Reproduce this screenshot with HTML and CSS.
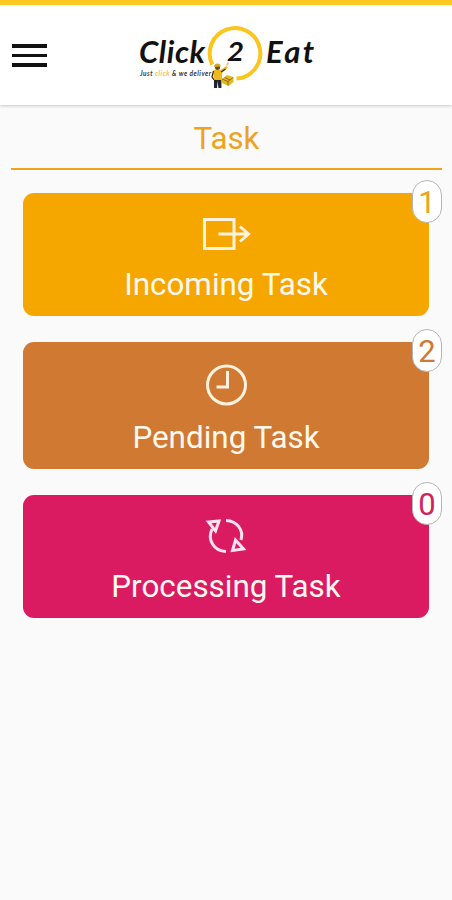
FILE: index.html
```
<!DOCTYPE html>
<html lang="en">
<head>
<meta charset="utf-8">
<title>Click 2 Eat</title>
<link rel="stylesheet" href="styles.css">
</head>
<body>
<header class="topbar">
  <button class="menu" aria-label="Menu"><span></span><span></span><span></span></button>
  <svg class="logo" viewBox="136 20 182 72" role="img" aria-label="Click 2 Eat">
    <path d="M212.300 64.500 A25.300 25.300 0 1 1 236.500 78.600" fill="none" stroke="#fbc51d" stroke-width="4"/>
    <g class="brand">
      <text x="139" y="63" textLength="66" lengthAdjust="spacing">Click</text>
      <text x="227" y="61" font-size="26" textLength="17" lengthAdjust="spacingAndGlyphs">2</text>
      <text x="266" y="63" textLength="48" lengthAdjust="spacing">Eat</text>
    </g>
    <text class="tagline" x="140" y="76" textLength="71" lengthAdjust="spacing">Just <tspan fill="#f9b75c">click</tspan> &amp; we deliver</text>
    <path d="M214 79v9h3l.7-7 .7 7h3v-9z" fill="#20242c"/>
    <path d="M213.500 70h7l6-4 1.500 1.500-6 5.500v7h-8.500z" fill="#efb91d"/>
    <path d="M213.500 71l-1.500 6 2 3M221 72l4.500-3" fill="none" stroke="#332e23" stroke-width="1.300"/>
    <circle cx="217.500" cy="67.500" r="2.500" fill="#5c4930"/>
    <path d="M214 67q.5-3.500 3.500-3.500t3.300 3z" fill="#d7a51a"/>
    <path d="M226.500 65.500l2-3" stroke="#f5c29d" stroke-width="2"/>
    <path d="M222 79l5-4 6.500 2v5l-5 4-6.500-3z" fill="#e4b81e"/>
    <path d="M222 79l6 2.500 5-4M228 81.500v4M224.500 77.500l5.500 2.500" fill="none" stroke="#75601c" stroke-width=".8"/>
  </svg>
</header>
<main>
  <h1>Task</h1>
  <section class="tasks">
    <a class="card incoming">
      <svg class="icon" viewBox="0 0 50 50"><path d="M3.500 10.500h29.500v29h-29.500zM17.500 25h30M39 17.500l8.500 7.500-8.500 7.500"/></svg>
      <span class="label">Incoming Task</span>
      <span class="badge">1</span>
    </a>
    <a class="card pending">
      <svg class="icon" viewBox="0 0 50 50"><circle cx="25.500" cy="25" r="19"/><path d="M26.500 11v16h-11"/></svg>
      <span class="label">Pending Task</span>
      <span class="badge">2</span>
    </a>
    <a class="card processing">
      <svg class="icon" viewBox="0 0 50 50"><path d="M25 9.500C36 10 43 19 40 29M25 40.500C13 40 6 29 11 18M7.500 11l10.500-1-3.500 10zM34.500 29l8 9-11 1.500z"/></svg>
      <span class="label">Processing Task</span>
      <span class="badge">0</span>
    </a>
  </section>
</main>
</body>
</html>
```
FILE: styles.css
```
* { box-sizing: border-box; }
body {
  margin: 0;
  min-height: 900px;
  background: #fafafa;
  font-family: Roboto, "Liberation Sans", sans-serif;
}
.topbar {
  display: flex;
  height: 105px;
  padding: 15px 0 0 12px;
  border-top: 5px solid #fdc920;
  background: #fff;
  box-shadow: 0 1px 3px rgba(0, 0, 0, .2);
}
.menu {
  display: flex;
  flex-direction: column;
  gap: 6px;
  width: 35px;
  height: 23px;
  margin: 24px 89px 0 0;
  padding: 0;
  border: 0;
  background: none;
}
.menu span { width: 34.500px; height: 3.500px; background: #111; }
.logo { width: 182px; height: 72px; }
.brand {
  font-family: Lato, sans-serif;
  font-size: 31px;
  font-style: italic;
  font-weight: 700;
  fill: #111;
}
.tagline {
  font-family: Lato, sans-serif;
  font-size: 6.500px;
  font-style: italic;
  font-weight: 700;
  fill: #333;
}
h1 {
  height: 65px;
  margin: 0 10px 0 11px;
  padding-top: 15px;
  border-bottom: 2px solid #f0a51b;
  color: #eda321;
  font-size: 31.300px;
  font-weight: 400;
  line-height: 38px;
  text-align: center;
}
.tasks {
  display: flex;
  flex-direction: column;
  gap: 26px;
  padding: 23px 23px 0;
}
.card {
  position: relative;
  display: flex;
  flex-direction: column;
  align-items: center;
  height: 123px;
  padding-top: 16px;
  border-radius: 11px;
  color: #fff8ee;
}
.incoming { background: #f5a700; }
.pending { height: 127px; padding-top: 18px; background: #cf7933; }
.processing { background: #da1b62; }
.icon {
  width: 50px;
  height: 50px;
  flex: none;
  fill: none;
  stroke: #fff3df;
  stroke-width: 3;
}
.processing .icon { stroke: #ffe3ee; }
.label {
  margin-top: 7px;
  font-size: 31.400px;
  line-height: 38px;
  white-space: nowrap;
}
.pending .label { margin-top: 9px; }
.badge {
  position: absolute;
  top: -13px;
  right: -13px;
  width: 30px;
  height: 43px;
  border: 1.500px solid #b5b5b5;
  border-radius: 15px;
  background: #fff;
  color: #eda321;
  font-size: 31px;
  line-height: 43px;
  text-align: center;
}
.pending .badge { color: #cf7933; }
.processing .badge { color: #cf2460; }
```
